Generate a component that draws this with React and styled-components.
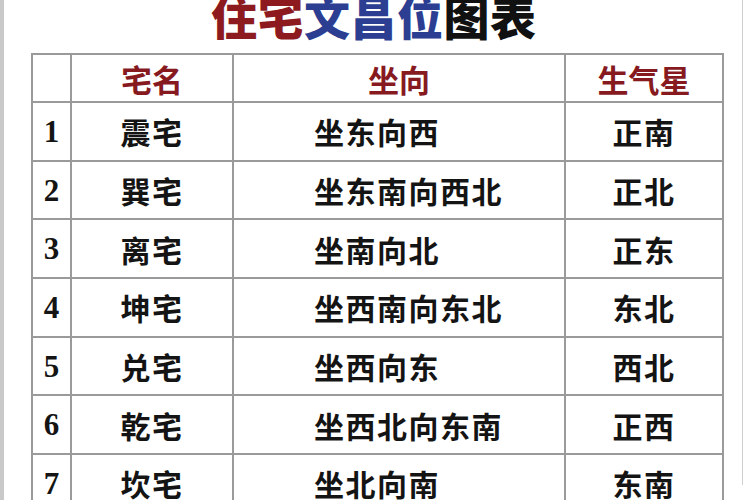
import styled, { createGlobalStyle } from 'styled-components';

const GlobalStyle = createGlobalStyle`
	body {
		margin: 0;
		background: #ffffff;
	}
`;

const rows = [
	{ no: 1, name: '震宅', facing: '坐东向西', star: '正南' },
	{ no: 2, name: '巽宅', facing: '坐东南向西北', star: '正北' },
	{ no: 3, name: '离宅', facing: '坐南向北', star: '正东' },
	{ no: 4, name: '坤宅', facing: '坐西南向东北', star: '东北' },
	{ no: 5, name: '兑宅', facing: '坐西向东', star: '西北' },
	{ no: 6, name: '乾宅', facing: '坐西北向东南', star: '正西' },
	{ no: 7, name: '坎宅', facing: '坐北向南', star: '东南' },
];

const Page = styled.div`
	width: 750px;
	height: 500px;
	overflow: hidden;
	box-sizing: border-box;
	border-left: 4px solid #c9c9c9;
	background: #ffffff;
`;

const Frame = styled.div`
	width: 739px;
	height: 500px;
	box-sizing: border-box;
	border-right: 1px solid #cfcfcf;
`;

const Title = styled.h1`
	margin: -15px 0 0 0;
	height: 64px;
	padding-left: 207px;
	font-family: 'Noto Sans CJK SC', sans-serif;
	font-weight: 900;
	font-size: 46px;
	line-height: 60px;
	letter-spacing: 0.5px;
	color: #111111;
	white-space: nowrap;
`;

const TitlePart = styled.span`
	color: ${(p) => p.$color};
`;

const Table = styled.table`
	margin: 4px 0 0 27px;
	width: 691px;
	table-layout: fixed;
	border-collapse: collapse;
	font-family: 'Noto Sans CJK SC', sans-serif;
	font-weight: 700;
	color: #141414;
`;

const Col = styled.col`
	width: ${(p) => p.$w}px;
`;

const HeadCell = styled.th`
	height: 46px;
	padding: 0;
	border: 2px solid #9a9a9a;
	font-size: 31px;
	font-weight: 700;
	color: #861a1f;
	text-align: center;
	line-height: 1;
`;

const Cell = styled.td`
	height: 56.7px;
	padding: 0 0 0 ${(p) => p.$pad || 0}px;
	border: 2px solid #9a9a9a;
	font-size: 30px;
	letter-spacing: 1.5px;
	text-align: ${(p) => p.$align || 'center'};
	line-height: 1;
	white-space: nowrap;
`;

const NumCell = styled(Cell)`
	font-family: 'Liberation Serif', serif;
	font-size: 31px;
	font-weight: 700;
	letter-spacing: 0;
`;

export default function App() {
	return (
		<Page>
			<GlobalStyle />
			<Frame>
				<Title>
					<TitlePart $color="#8c1a1f">住宅</TitlePart>
					<TitlePart $color="#2c3e92">文昌位</TitlePart>
					<TitlePart $color="#111111">图表</TitlePart>
				</Title>
				<Table>
					<colgroup>
						<Col $w={39} />
						<Col $w={162} />
						<Col $w={332} />
						<Col $w={158} />
					</colgroup>
					<thead>
						<tr>
							<HeadCell />
							<HeadCell>宅名</HeadCell>
							<HeadCell>坐向</HeadCell>
							<HeadCell>生气星</HeadCell>
						</tr>
					</thead>
					<tbody>
						{rows.map((row) => (
							<tr key={row.no}>
								<NumCell>{row.no}</NumCell>
								<Cell>{row.name}</Cell>
								<Cell $align="left" $pad={80}>
									{row.facing}
								</Cell>
								<Cell>{row.star}</Cell>
							</tr>
						))}
					</tbody>
				</Table>
			</Frame>
		</Page>
	);
}
